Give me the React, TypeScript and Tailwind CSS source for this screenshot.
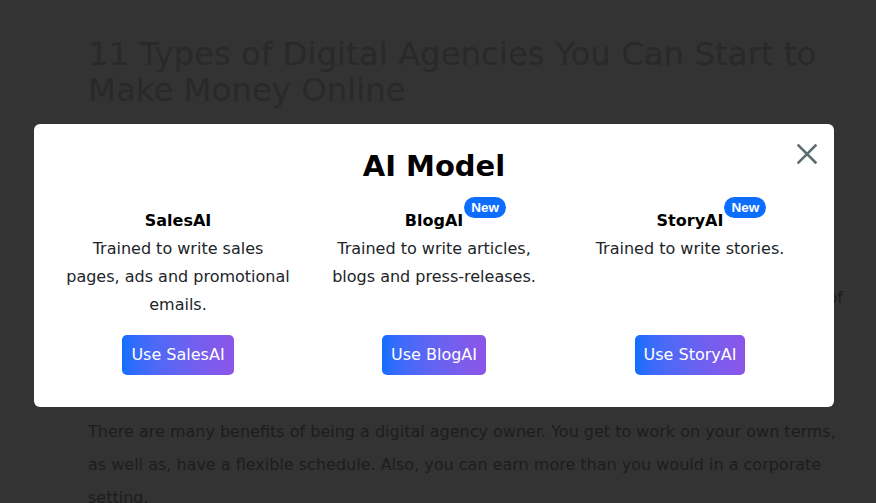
import { useState } from "react";

const models = [
    {
        name: "SalesAI",
        text: "Trained to write sales pages, ads and promotional emails.",
        isNew: false,
    },
    {
        name: "BlogAI",
        text: "Trained to write articles, blogs and press-releases.",
        isNew: true,
    },
    {
        name: "StoryAI",
        text: "Trained to write stories.",
        isNew: true,
    },
];

function CloseIcon() {
    return (
        <svg width="20" height="20" viewBox="0 0 20 20" fill="none">
            <path
                d="M1.5 1.5L18.5 18.5M18.5 1.5L1.5 18.5"
                stroke="#5f6c73"
                strokeWidth="2.6"
                strokeLinecap="square"
            />
        </svg>
    );
}

export default function App() {
    const [open, setOpen] = useState(true);

    return (
        <div className="relative min-h-[503px] h-[503px] overflow-hidden bg-[#333333] font-['DejaVu_Sans',sans-serif]">
            {/* page behind the overlay */}
            <div className="ml-[88px] w-[760px] pt-[36px]">
                <h1 className="text-[32.4px] leading-[36px] text-[#292929]">
                    11 Types of Digital Agencies You Can Start to Make Money
                    Online
                </h1>
                <div className="mt-[41px] h-[266px] text-base leading-[33px] text-[#1d1d1d]">
                    <div className="whitespace-nowrap">
                        Digital agencies help businesses grow their presence
                        online.
                    </div>
                    <div className="whitespace-nowrap">
                        They offer services like marketing, design and
                        development.
                    </div>
                    <div className="whitespace-nowrap">
                        Many people are starting their own agency today.
                    </div>
                    <div className="whitespace-nowrap">
                        It is a business that you can run from anywhere.
                    </div>
                    <div className="w-[755px] whitespace-nowrap text-right">
                        In this article we will look at the different types of
                    </div>
                </div>
                <p className="w-[760px] text-base leading-[33px] text-[#1d1d1d]">
                    There are many benefits of being a digital agency owner. You
                    get to work on your own terms, as well as, have a flexible
                    schedule. Also, you can earn more than you would in a
                    corporate setting.
                </p>
            </div>

            {open && (
                <div className="absolute left-[34px] top-[124px] w-[800px] rounded-md bg-white px-4 pt-6 pb-8 text-[#212529]">
                    <button
                        onClick={() => setOpen(false)}
                        className="absolute right-[17px] top-[20px] p-0"
                    >
                        <CloseIcon />
                    </button>
                    <h2 className="text-center text-[29px] font-bold leading-[37px] text-black">
                        AI Model
                    </h2>
                    <div className="mt-[22px] grid grid-cols-3">
                        {models.map((m) => (
                            <div
                                key={m.name}
                                className="flex flex-col items-center px-[15px] text-center"
                            >
                                <div className="relative text-base font-bold leading-7 text-black">
                                    {m.name}
                                    {m.isNew && (
                                        <span className="absolute left-[calc(100%+1px)] top-[-10px] rounded-full bg-[#0d6efd] px-[7px] font-['Liberation_Sans',sans-serif] text-[13.5px] font-bold leading-[21px] text-white">
                                            New
                                        </span>
                                    )}
                                </div>
                                <p className="h-[84px] text-base leading-7">
                                    {m.text}
                                </p>
                                <button className="mt-[16px] h-10 rounded-[5px] bg-gradient-to-r from-[#0d6efd] to-[#8c55e8] px-[9px] text-base text-white">
                                    Use {m.name}
                                </button>
                            </div>
                        ))}
                    </div>
                </div>
            )}
        </div>
    );
}
